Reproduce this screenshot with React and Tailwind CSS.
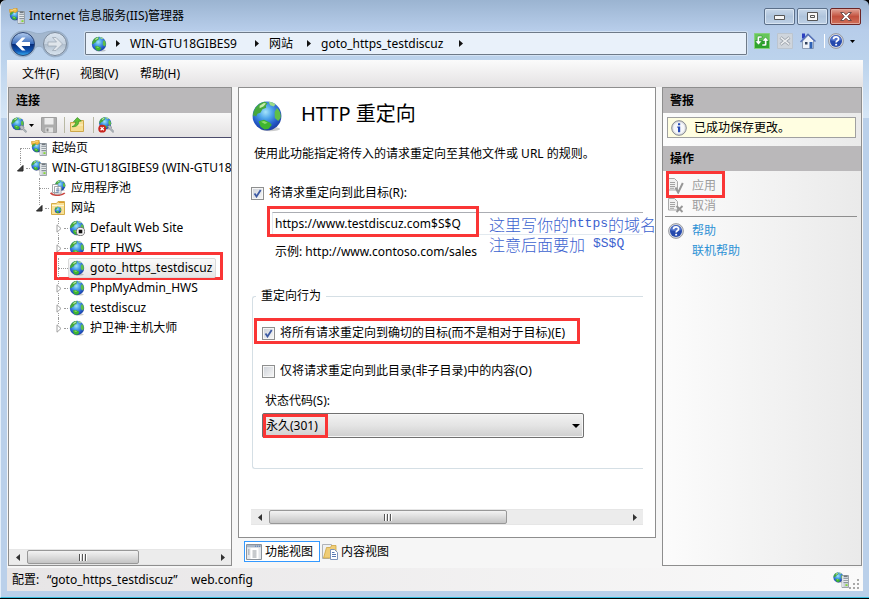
import React, { useId, useState } from "react";

function GlobeArt({ cx = 8, cy = 8, r = 7.2 }) {
  const id = useId();
  const s = r / 7.2;
  return (
    <g transform={`translate(${cx - 8 * s} ${cy - 8 * s}) scale(${s})`}>
      <defs>
        <radialGradient id={id} cx="0.45" cy="0.36" r="0.66">
          <stop offset="0" stopColor="#a5e4fa" />
          <stop offset="0.35" stopColor="#4fa6ea" />
          <stop offset="0.75" stopColor="#2358c8" />
          <stop offset="1" stopColor="#1b3a9c" />
        </radialGradient>
      </defs>
      <ellipse cx="9.6" cy="14.5" rx="5" ry="1.1" fill="#000" opacity="0.2" />
      <circle cx="8" cy="8" r="7.2" fill={`url(#${id})`} />
      <path d="M1 8.4C.8 4.600 3.800 1.200 7 .9l1.300.8-.9 1 .2 1.200-1.900.7-1 1.800-1.500.5-.6 1.300-.9-.6Z" fill="#46a83c" />
      <path d="M4.300 2.900L6.500 1.500l1 .3-1.300 1.500-1.900.8Z" fill="#c6ecac" />
      <path d="M8.800.9c1.500.1 2.600.6 3.500 1.300l-1 1.100-1.700-.7Z" fill="#9bdb86" />
      <path d="M13 4c1.500 1.300 2.100 3.200 1.800 5l-1.200 1.500-1.700-1.500-.1-3Z" fill="#5fbf47" />
      <path d="M3.800 10.600l2.700-.7 2.900 1.300 1 1.300-1.700 2-2 .2-1.900-1.300Z" fill="#3fb52f" />
      <path d="M5 10.900l1.500-.4 1.800.9-1.400.6Z" fill="#8cdc6c" />
    </g>
  );
}

function Svg({ size = 16, children, className = "", box = "0 0 16 16" }) {
  return (
    <svg aria-hidden="true" width={size} height={size} viewBox={box} className={"shrink-0 " + className}>
      {children}
    </svg>
  );
}

function ServerBox() {
  return (
    <g>
      <path d="M9 3.500h6.500v12H9z" fill="#c9cfd4" stroke="#8b949b" strokeWidth="0.800" />
      <path d="M9.800 4v11" stroke="#f3f6f8" />
      <path d="M10.800 4.200h3.700" stroke="#4c555c" />
      <path d="M10.500 6.500h4.500M10.500 8.500h4.500M10.500 10.500h4.500" stroke="#79848c" strokeWidth="0.800" />
      <path d="M10.500 7.300h4.500M10.500 9.300h4.500" stroke="#fff" strokeWidth="0.700" />
      <path d="M12.500 12.300h2v1.600h-2z" fill="#7bdc1e" />
    </g>
  );
}

const Globe = ({ size = 16 }) => (
  <Svg size={size}>
    <GlobeArt />
  </Svg>
);

const IisIcon = () => (
  <Svg>
    <GlobeArt cx={6} cy={7} r={5.2} />
    <ServerBox />
    <path d="M.5 1.500h3.200l1-1h3.500v3L6 4.700 4 3.200.9 4.700Z" fill="#f4bd42" stroke="#cf8f1a" strokeWidth="0.600" />
    <path d="M1.500 2.200h2.500l1-1h2" stroke="#fde9a8" strokeWidth="0.700" fill="none" />
  </Svg>
);

const ServerIcon = () => (
  <Svg>
    <GlobeArt cx={5.4} cy={5.400} r={5} />
    <ServerBox />
  </Svg>
);

const PoolIcon = () => (
  <Svg>
    <GlobeArt cx={10.200} cy={5.500} r={5.200} />
    <path d="M.6 12.800c2 3.200 11 3.200 14.200.2" fill="none" stroke="#cb4640" strokeWidth="1.700" />
    <path d="M2.500 4.500H8v8H2.500zM4.500 6.500h6.500v7.500H4.500z" fill="#fff" stroke="#9a9ea3" strokeWidth="0.900" />
    <path d="M6 9h3.500M6 10.600h3.500M6 12.200h3.500" stroke="#6483ae" strokeWidth="0.800" />
  </Svg>
);

const SitesIcon = () => (
  <Svg>
    <path d="M1.500 3.500h5l1.500-2h6.500v13h-13z" fill="#f8e196" stroke="#d5ad49" />
    <path d="M8.500 2.500H14" stroke="#e09a2b" />
    <path d="M2 5.500h12" stroke="#fff7d8" />
    <GlobeArt cx={8} cy={10} r={3.300} />
  </Svg>
);

const StoppedSite = () => (
  <Svg>
    <GlobeArt />
    <circle cx="11.500" cy="11.500" r="4.100" fill="#f7f7f7" stroke="#6d6d6d" strokeWidth="0.900" />
    <path d="M9.700 9.700h3.600v3.600H9.700z" fill="#111" />
  </Svg>
);

const ConnectIcon = () => (
  <Svg>
    <GlobeArt cx={6.700} cy={6.700} r={6.300} />
    <path d="M8.500 9.500l2.200-1.300 2.300 1.800-.2 1.500 3 3-1 1-3-3-1.800.2Z" fill="#b7bec4" stroke="#737c84" strokeWidth="0.600" />
  </Svg>
);

const DisconnectIcon = () => (
  <Svg>
    <GlobeArt cx={7.200} cy={6.300} r={6.100} />
    <path d="M9.500 9.500l2.200-1.300 1.800 1.800-.2 1.500 2.700 3-1 1-3-3Z" fill="#b7bec4" stroke="#737c84" strokeWidth="0.600" />
    <circle cx="4.200" cy="11.700" r="3.900" fill="#c9231d" />
    <path d="M2.600 10.100l3.200 3.200m0-3.200l-3.200 3.200" stroke="#fff" strokeWidth="1.300" />
  </Svg>
);

const SaveIcon = () => (
  <Svg>
    <path d="M.500.500h15v15h-13l-2-2Z" fill="#adadad" stroke="#a0a0a0" />
    <path d="M3.500 1h9v6.500h-9z" fill="#ececec" />
    <path d="M4.500 10.500h7.500v5H4.500z" fill="#e2e2e2" />
    <path d="M5.500 11.500h2v3h-2z" fill="#8c8c8c" />
  </Svg>
);

const UpFolderIcon = () => (
  <Svg>
    <path d="M1.500 5.500h7l1.500-2h4.500v11h-13z" fill="#f6dd90" stroke="#cda74a" />
    <path d="M2 8h12" stroke="#fdf1c6" />
    <path d="M3 9.700C5.500 8.800 6.700 7.200 6.800 4.600L4.400 4.800 8.300.500l4 3.500-2.600.4c0 4-2.600 5.600-6.700 5.300Z" fill="#5fbe35" stroke="#2f8a20" strokeWidth="0.600" />
  </Svg>
);

function HelpIcon() {
  return (
    <Svg>
      <circle cx="8" cy="8" r="7.400" fill="#d7dae0" stroke="#85888f" strokeWidth="0.800" />
      <circle cx="8" cy="8" r="6" fill="#2549ad" />
      <path d="M2.500 7a5.600 5.600 0 0 1 11 0c-3 1.500-8 1.500-11 0Z" fill="#5275cd" />
      <path d="M5.500 6.300c0-3.300 5.100-3.200 5.100-.3 0 1.800-2.500 1.700-2.500 3.500" fill="none" stroke="#fff" strokeWidth="1.700" />
      <path d="M7.200 10.800h1.900v1.700H7.200z" fill="#fff" />
    </Svg>
  );
}

const InfoIcon = () => (
  <Svg>
    <circle cx="8" cy="8" r="7.300" fill="#dfe1e6" stroke="#85888f" />
    <circle cx="8" cy="8" r="5.600" fill="#f7f8fa" />
    <path d="M7 3.200h2.200v2H7zM6.300 6.600h2.900v5.600H7V7.800h-.7z" fill="#2549b5" />
  </Svg>
);

const DocMark = ({ cross }) => (
  <Svg>
    <path d="M.500.500h6l3 3v8.500h-9z" fill="#f1f1f1" stroke="#a9a9a9" />
    <path d="M2 4.500h5M2 6.500h5M2 8.500h5M2 10.300h4" stroke="#a3a3a3" />
    {cross ? (
      <path d="M8.500 8l6 6m0-6l-6 6" stroke="#979797" strokeWidth="1.900" />
    ) : (
      <path d="M7.500 9.500l2.700 5 4.600-9.500" fill="none" stroke="#979797" strokeWidth="2" />
    )}
  </Svg>
);

const FeatureViewIcon = () => (
  <Svg>
    <path d="M.500.500h15v15H.500z" fill="#fff" stroke="#8b929b" />
    <path d="M1 1h14v2.500H1z" fill="#a9b6c6" />
    <path d="M9 2.200h5" stroke="#5279b5" strokeDasharray="1 1" />
    <path d="M1 4h3.500v11H1zM12.500 4H15v11h-2.500z" fill="#e3e6ea" />
    <path d="M2 6h1.500M2 8h1.500M2 10h1.500M6.500 7h4M6.500 9h4M6.500 11h4M6.500 13h4" stroke="#747b84" strokeWidth="0.800" />
  </Svg>
);

const ContentViewIcon = () => (
  <Svg>
    <path d="M.500.500h9v11l-2 3h-7z" fill="#f0f1f2" stroke="#b0b3b7" />
    <path d="M1.500 14L4.500 3.500h4l1-2h4.500v12.500z" fill="#f0cd76" stroke="#cda443" strokeWidth="0.800" />
    <path d="M8.500 5.500h4l3 3v7h-7z" fill="#fff" stroke="#7d94bb" />
    <path d="M10 8.500h2.500M10 10.500h4M10 12.500h4" stroke="#5879b3" />
  </Svg>
);

function NavButtons() {
  return (
    <div className="grid shrink-0 [&>*]:[grid-area:1/1]">
      <svg aria-hidden="true" width="60" height="28" viewBox="0 0 60 28">
        <defs>
          <linearGradient id="navBlue" x1="0" y1="0" x2="0" y2="1">
            <stop offset="0" stopColor="#b4cdee" />
            <stop offset="0.48" stopColor="#3a6dbd" />
            <stop offset="0.52" stopColor="#062c7a" />
            <stop offset="0.8" stopColor="#0f56b4" />
            <stop offset="1" stopColor="#39b4f5" />
          </linearGradient>
          <linearGradient id="navGray" x1="0" y1="0" x2="0" y2="1">
            <stop offset="0" stopColor="#dbe5ef" />
            <stop offset="0.5" stopColor="#c6d2df" />
            <stop offset="0.52" stopColor="#b1bfce" />
            <stop offset="1" stopColor="#dbe6f1" />
          </linearGradient>
        </defs>
        <path d="M14 1C24 1 24 3.500 30 3.500S36 1 46 1a13 13 0 1 1-12 17.500c-2-3-6-3-8 0A13 13 0 1 1 14 1Z" fill="#a3b7ce" stroke="#93a9c3" strokeWidth="0.800" />
        <circle cx="14" cy="14" r="11.500" fill="url(#navBlue)" stroke="#2d4675" />
        <circle cx="46" cy="14" r="11.500" fill="url(#navGray)" stroke="#7c8a9b" />
        <path d="M6.500 14l6.500-6.500h3.500L12.500 12H21v4h-8.500l4 4.500H13Z" fill="#fff" />
        <path d="M53.500 14L47 7.500h-3.500l4 4.500H39v4h8.500l-4 4.500H47Z" fill="#dfe5eb" stroke="#98a4b0" strokeWidth="0.700" />
      </svg>
      <div className="flex justify-between">
        <button aria-label="后退" className="size-7 rounded-full" />
        <button aria-label="前进" disabled className="size-7 rounded-full" />
      </div>
    </div>
  );
}

const CrumbArrow = () => (
  <svg aria-hidden="true" width="4" height="7" viewBox="0 0 4 7" className="shrink-0">
    <path d="M0 0l4 3.500L0 7z" fill="#111" />
  </svg>
);

const DownArrow = ({ wide }) => (
  <svg aria-hidden="true" width={wide ? 8 : 5} height={wide ? 4 : 3} viewBox="0 0 8 4" preserveAspectRatio="none" className="shrink-0">
    <path d="M0 0h8L4 4z" fill="#000" />
  </svg>
);

function TitleBar() {
  return (
    <header className="flex h-[60px] flex-col pr-0.5">
      <div className="flex h-8 items-start justify-between">
        <h1 className="flex items-center gap-1 pl-0.5 pt-1.5 text-xs leading-5">
          <IisIcon />
          Internet 信息服务(IIS)管理器
        </h1>
        <div className="flex gap-0.5 pt-2">
          <button aria-label="最小化" className="grid h-[17px] w-[31px] place-items-center rounded-[2px] border border-[#5b6f89] bg-linear-to-b from-[#c9d8e9] via-[#afc4dc] via-50% to-[#bed0e5] pt-0.5 shadow-[inset_0_0_0_1px_#d9e5f2]">
            <svg width="12" height="5" aria-hidden="true"><path d="M.500.500h10v4H.500z" fill="#f7f7f7" stroke="#555" /></svg>
          </button>
          <button aria-label="最大化" className="grid h-[17px] w-[31px] place-items-center rounded-[2px] border border-[#5b6f89] bg-linear-to-b from-[#c9d8e9] via-[#afc4dc] via-50% to-[#bed0e5] shadow-[inset_0_0_0_1px_#d9e5f2]">
            <svg width="11" height="9" aria-hidden="true"><path d="M.500.500h10v8H.500zM3.500 3.500h4v2h-4z" fill="#f7f7f7" stroke="#555" /></svg>
          </button>
          <button aria-label="关闭" className="grid h-[17px] w-[31px] place-items-center rounded-[2px] border border-[#6c2525] bg-linear-to-b from-[#e0a498] via-[#c2503d] via-50% to-[#d0705a] shadow-[inset_0_0_0_1px_#e2a99d]">
            <svg width="12" height="9" viewBox="0 0 12 9" aria-hidden="true">
              <path d="M.700.500h3L6 2.800 8.300.500h3L7.800 4.500l3.500 4h-3L6 6.200 3.700 8.500h-3l3.500-4Z" fill="#fff" stroke="#4f3535" strokeWidth="0.800" />
            </svg>
          </button>
        </div>
      </div>
      <div className="flex h-[28px] items-start">
        <div className="-mt-0.5 ml-0.5"><NavButtons /></div>
        <nav aria-label="地址" className="ml-4 flex h-[23px] min-w-0 flex-1 items-center rounded-[1px] border border-[#6e7a88] bg-[#e9f1fa] pl-[5px] text-xs shadow-[0_0_0_1px_#d3e2f3]">
          <Globe />
          <span className="px-[9px]"><CrumbArrow /></span>
          <a href="#server" className="min-w-[126px] pl-px">WIN-GTU18GIBES9</a>
          <CrumbArrow />
          <a href="#sites" className="ml-2.5 min-w-[38px]">网站</a>
          <CrumbArrow />
          <a href="#site" className="ml-2.5 min-w-[138px]">goto_https_testdiscuz</a>
          <CrumbArrow />
        </nav>
        <div className="ml-[7px] flex h-[18px] w-[107px] items-center">
          <button aria-label="刷新" className="mr-[7px]">
            <Svg>
              <path d="M.500.500h15v15H.500z" fill="#2fa62c" stroke="#86d07c" />
              <path d="M1 1h14v6.500H1z" fill="#66c75a" />
              <path d="M8 3v2H5.500v3H8l-3.500 4L1 8h2.200V5c0-1.400.8-2 2-2ZM8 13v-2h2.500V8H8l3.500-4L15 8h-2.200v3c0 1.400-.8 2-2 2Z" fill="#fff" stroke="#177a1c" strokeWidth="0.500" />
            </Svg>
          </button>
          <button aria-label="停止" disabled className="mr-[7px]">
            <Svg>
              <path d="M.500.500h15v15H.500z" fill="#cfd5dc" stroke="#bcc5cf" />
              <path d="M3.500 4.500l9 7m0-7l-9 7" stroke="#9ba2aa" strokeWidth="3" />
              <path d="M3.800 4.700l8.400 6.600m0-6.600l-8.400 6.600" stroke="#eceef0" strokeWidth="1.500" />
            </Svg>
          </button>
          <button aria-label="主页" className="mr-2">
            <Svg>
              <path d="M2 .5h3v5H2z" fill="#2c3fc0" />
              <path d="M2.500 8L8.500 2l5 5.500v8h-11z" fill="#eef2f8" stroke="#7c8ba3" strokeWidth="0.800" />
              <path d="M.500 9L8 1.200l7.500 7.300" fill="none" stroke="#5570b8" strokeWidth="1.500" />
              <path d="M9.500 9h3v6.500h-3z" fill="#2e62b5" /><path d="M5 9h2.500v2.500H5z" fill="#33435f" />
            </Svg>
          </button>
          <span className="mr-[3px] h-3.5 w-px bg-white" />
          <button aria-label="帮助" className="flex items-center gap-1.5"><HelpIcon /><DownArrow /></button>
        </div>
      </div>
    </header>
  );
}

function PanelHeader({ children }) {
  return <h2 className="h-[25px] shrink-0 bg-[#bab8ba] pl-[7px] text-xs leading-[25px] font-bold">{children}</h2>;
}

function ScrollBar({ thumb }) {
  return (
    <div className="flex h-4 shrink-0 items-stretch border-y border-[#e6e6e6] bg-[#ececec]">
      <button aria-label="向左滚动" className="grid w-[18px] place-items-center">
        <svg width="4" height="7" aria-hidden="true"><path d="M4 0L0 3.500 4 7z" fill="#333" /></svg>
      </button>
      <div className="flex min-w-0 flex-1">
        <div className={"flex items-center justify-center gap-px rounded-[2px] border border-[#989898] bg-linear-to-b from-[#f3f3f3] via-[#dcdcdc] via-50% to-[#c4c4c4] " + thumb}>
          <span className="h-[7px] w-0.5 border-l border-[#555] bg-white" />
          <span className="h-[7px] w-0.5 border-l border-[#555] bg-white" />
          <span className="h-[7px] w-0.5 border-l border-[#555] bg-white" />
        </div>
      </div>
      <button aria-label="向右滚动" className="grid w-[17px] place-items-center">
        <svg width="4" height="7" aria-hidden="true"><path d="M0 0l4 3.500L0 7z" fill="#333" /></svg>
      </button>
    </div>
  );
}

/* One line of the tree: connector cell, expander, icon and caption. */
function TreeRow({ icon, label, state, up = true, down = true, selected }) {
  return (
    <div className={"flex h-5 items-center " + (selected ? "relative isolate" : "")}>
      {selected && <span className="pointer-events-none absolute -top-1.5 left-0 -z-10 h-7 w-[169px] border-[3px] border-[#fa3535] bg-white" />}
      <span className="flex h-full w-[9px] shrink-0 flex-col items-center">
        <span className={"flex-1 " + (up ? "border-l border-dotted border-[#9a9a9a]" : "")} />
        {state === "open" && <svg width="7" height="7" aria-hidden="true"><path d="M6 .500V6H.500z" fill="#404040" stroke="#222" /></svg>}
        {state === "closed" && <svg width="6" height="9" aria-hidden="true"><path d="M1 .800l4 3.700-4 3.700z" fill="#fff" stroke="#a0a0a0" /></svg>}
        <span className={"flex-1 " + (down ? "border-l border-dotted border-[#9a9a9a]" : "")} />
      </span>
      <span className={"h-px shrink-0 border-t border-dotted border-[#9a9a9a] " + (state ? "ml-px w-1" : "-ml-1 w-[9px]")} />
      <a
        href="#node"
        className={
          "relative flex h-5 items-center gap-[5px] whitespace-nowrap rounded-[2px] border pr-[3px] text-xs " +
          (selected ? "border-[#dadada] bg-linear-to-b from-[#fafafa] to-[#e6e6e6]" : "border-transparent")
        }
      >
        {icon}
        {label}
      </a>
    </div>
  );
}

function Connections() {
  return (
    <aside className="flex w-[224px] shrink-0 flex-col border border-[#8e8e8e] bg-white">
      <PanelHeader>连接</PanelHeader>
      <div className="flex h-[25px] shrink-0 items-center border-b border-[#4b4b6b] bg-linear-to-b from-[#f8f8f8] to-[#e4e2e3] pl-0.5">
        <button aria-label="创建新的连接" className="mr-[7px] flex items-center gap-0.5"><ConnectIcon /><DownArrow /></button>
        <button aria-label="保存连接" disabled><SaveIcon /></button>
        <span className="mr-1 ml-[7px] h-4 w-px bg-[#b9b9a4]" />
        <button aria-label="向上"><UpFolderIcon /></button>
        <span className="mr-1 ml-2 h-4 w-px bg-[#b9b9a4]" />
        <button aria-label="删除连接"><DisconnectIcon /></button>
      </div>
      <div className="flex-1 overflow-hidden pl-[7px]">
        <ul>
          <li><TreeRow icon={<IisIcon />} label="起始页" up={false} /></li>
          <li>
            <TreeRow icon={<ServerIcon />} label="WIN-GTU18GIBES9 (WIN-GTU18GIBES9\Administrator)" state="open" down={false} />
            <ul className="pl-[19px]">
              <li><TreeRow icon={<PoolIcon />} label="应用程序池" /></li>
              <li>
                <TreeRow icon={<SitesIcon />} label="网站" state="open" down={false} />
                <ul className="pl-[19px]">
                  <li><TreeRow icon={<StoppedSite />} label="Default Web Site" state="closed" /></li>
                  <li><TreeRow icon={<Globe />} label="FTP_HWS" state="closed" /></li>
                  <li><TreeRow icon={<Globe />} label="goto_https_testdiscuz" selected /></li>
                  <li><TreeRow icon={<Globe />} label="PhpMyAdmin_HWS" state="closed" /></li>
                  <li><TreeRow icon={<Globe />} label="testdiscuz" state="closed" /></li>
                  <li><TreeRow icon={<Globe />} label="护卫神·主机大师" state="closed" down={false} /></li>
                </ul>
              </li>
            </ul>
          </li>
        </ul>
      </div>
      <ScrollBar thumb="w-[112px]" />
    </aside>
  );
}

function CheckRow({ label, initial, children }) {
  const [on, setOn] = useState(initial);
  return (
    <label className="relative flex h-5 items-center gap-[5px] whitespace-nowrap">
      {children}
      <span className="grid size-[13px] place-items-center [&>*]:[grid-area:1/1]">
        <input
          type="checkbox"
          checked={on}
          onChange={() => setOn(!on)}
          className="size-[13px] appearance-none border border-[#8e8f8f] bg-linear-to-br from-[#cdd1d8] to-[#f8f8f8] shadow-[inset_0_0_0_1px_#f6f6f6]"
        />
        {on && (
          <svg width="9" height="9" viewBox="0 0 9 9" aria-hidden="true" className="pointer-events-none">
            <path d="M1.500 4.500l2 3L7.700 1" fill="none" stroke="#3d5aa3" strokeWidth="1.800" />
          </svg>
        )}
      </span>
      {label}
    </label>
  );
}

function FeaturePane() {
  return (
    <section className="flex min-h-0 flex-1 flex-col overflow-hidden border border-[#8e8e8e] bg-white py-3 pr-3 pl-3 text-xs">
      <div className="flex h-8 items-start gap-[18px]">
        <Globe size={32} />
        <h2 className="text-[20px] leading-7">HTTP 重定向</h2>
      </div>
      <p className="mt-3 pl-[3px] leading-5 whitespace-nowrap">使用此功能指定将传入的请求重定向至其他文件或 URL 的规则。</p>
      <div className="mt-[19px]"><CheckRow label="将请求重定向到此目标(R):" initial={true} /></div>
      <div className="relative mt-[9px] ml-[21px]">
        <input
          aria-label="重定向目标"
          defaultValue="https://www.testdiscuz.com$S$Q"
          className="block h-[23px] w-full border border-r-0 border-[#e2e9ef] border-t-[#abadb3] px-0.5 outline-none"
        />
        <span className="pointer-events-none absolute -top-1.5 -left-[5px] h-[31px] w-[212px] border-[3px] border-[#fa3535]" />
        <div className="pointer-events-none absolute top-0.5 left-[217px] font-['Noto_Sans_CJK_SC',sans-serif] text-base font-light whitespace-nowrap text-[#3c62cf]">
          <p className="flex h-5 items-center leading-5">
            这里写你的<span className="font-['Liberation_Mono',monospace] text-[13px]">https</span>的域名
          </p>
          <p className="flex h-5 items-center gap-2 leading-5">
            注意后面要加<span className="font-['Liberation_Mono',monospace] text-[13px]">$S$Q</span>
          </p>
        </div>
      </div>
      <p className="mt-[7px] pl-6 leading-5">示例: http://www.contoso.com/sales</p>
      <fieldset className="mt-6 ml-px rounded-l-[3px] border border-r-0 border-[#d5dfe5] pb-[30px] pl-[9px]">
        <legend className="-ml-1.5 px-[5px] leading-5">重定向行为</legend>
        <div className="mt-[17px]">
          <CheckRow label="将所有请求重定向到确切的目标(而不是相对于目标)(E)" initial={true}>
            <span className="pointer-events-none absolute -top-[5px] -left-2 h-[26px] w-[326px] border-[3px] border-[#fa3535]" />
          </CheckRow>
        </div>
        <div className="mt-[18px]"><CheckRow label="仅将请求重定向到此目录(非子目录)中的内容(O)" initial={false} /></div>
        <label htmlFor="status" className="mt-2.5 block pl-[3px] leading-5">状态代码(S):</label>
        <div className="relative mt-0.5 w-[322px]">
          <select
            id="status"
            className="block h-[25px] w-full appearance-none rounded-[2px] border border-[#707070] bg-linear-to-b from-[#f2f2f2] via-[#e4e4e4] via-50% to-[#cfcfcf] pl-[3px] shadow-[inset_0_0_0_1px_#f6f6f6] outline-none"
          >
            <option>永久(301)</option>
            <option>已找到(302)</option>
            <option>临时(307)</option>
          </select>
          <span className="pointer-events-none absolute top-px left-px h-6 w-[65px] border-[3px] border-[#fa3535]" />
          <span className="pointer-events-none absolute top-[11px] right-1"><DownArrow wide /></span>
        </div>
      </fieldset>
      <div className="mt-auto"><ScrollBar thumb="w-[238px]" /></div>
    </section>
  );
}

function ActionsPane() {
  return (
    <aside className="flex w-[200px] shrink-0 flex-col border border-[#8e8e8e] bg-linear-to-r from-[#fcfcfc] to-[#eaeaea] text-xs">
      <PanelHeader>警报</PanelHeader>
      <div className="mt-1 mr-[5px] mb-2 ml-1 flex h-[21px] items-center gap-[7px] border border-[#a0a0a0] bg-[#fffee1] pl-[3px]">
        <InfoIcon />
        已成功保存更改。
      </div>
      <PanelHeader>操作</PanelHeader>
      <div className="flex flex-col items-start pt-[5px] pl-[5px] leading-5">
        <button disabled className="relative flex h-5 items-center gap-2 text-[#9d9d9d]">
          <span className="absolute -top-[5px] -left-0.5 h-[27px] w-[59px] border-[3px] border-[#fa3535]" />
          <DocMark />
          应用
        </button>
        <button disabled className="flex h-5 items-center gap-2 text-[#9d9d9d]">
          <DocMark cross />
          取消
        </button>
      </div>
      <hr className="mr-1 ml-0.5 border-[#8e8e8e]" />
      <div className="flex flex-col items-start pt-1 pl-[5px] leading-5 text-[#2e92d5]">
        <a href="#help" className="flex h-5 items-center gap-2"><HelpIcon />帮助</a>
        <a href="#online" className="pl-6">联机帮助</a>
      </div>
    </aside>
  );
}

export default function App() {
  return (
    <div className="flex min-h-screen flex-col border-b border-black bg-black font-['Noto_Sans','Noto_Sans_CJK_SC',sans-serif] text-black">
      <div className="flex flex-1 flex-col rounded-tl-[6px] rounded-tr-[6px] border-b border-l border-b-[#35bcdc] border-l-[#e3eefa] bg-[linear-gradient(to_bottom,#9bb4d1_0,#b7cdea_30px,#bcd3ec_60px,#d6e6f6_118px,#bad0ea_118px)] px-1.5 pb-1.5">
        <TitleBar />
        <div className="flex flex-1 flex-col bg-[#f6f6f6]">
          <nav className="flex h-[27px] items-center bg-linear-to-b from-[#fbfbfb] to-[#e4e2e3] pl-[15px] text-xs">
            <button className="min-w-[58px] text-left">文件(F)</button>
            <button className="min-w-[60px] text-left">视图(V)</button>
            <button>帮助(H)</button>
          </nav>
          <main className="flex flex-1 gap-1.5 pr-px pl-px">
            <Connections />
            <div className="flex min-w-0 flex-1 flex-col">
              <FeaturePane />
              <div className="flex h-7 items-start gap-0.5 pt-[3px] pl-1.5 text-xs">
                <button className="flex h-[21px] items-center gap-[3px] border border-[#3399ff] bg-white pr-1.5 pl-px"><FeatureViewIcon />功能视图</button>
                <button className="flex h-[21px] items-center gap-[3px]"><ContentViewIcon />内容视图</button>
              </div>
            </div>
            <ActionsPane />
          </main>
          <footer className="mt-0.5 flex h-[23px] items-center bg-linear-to-r from-[#e7e5e6] to-[#fafafa] pl-[5px] text-xs">
            <span className="w-[35px]">配置:</span>
            <span className="w-[144px]">“goto_https_testdiscuz”</span>
            <span className="flex-1">web.config</span>
            <ServerIcon />
            <svg width="12" height="12" aria-hidden="true" className="mr-0.5 self-end">
              <path d="M8 0h2v2H8zM8 4h2v2H8zM4 4h2v2H4zM8 8h2v2H8zM4 8h2v2H4zM0 8h2v2H0z" fill="#a8a8a8" />
            </svg>
          </footer>
        </div>
      </div>
    </div>
  );
}
